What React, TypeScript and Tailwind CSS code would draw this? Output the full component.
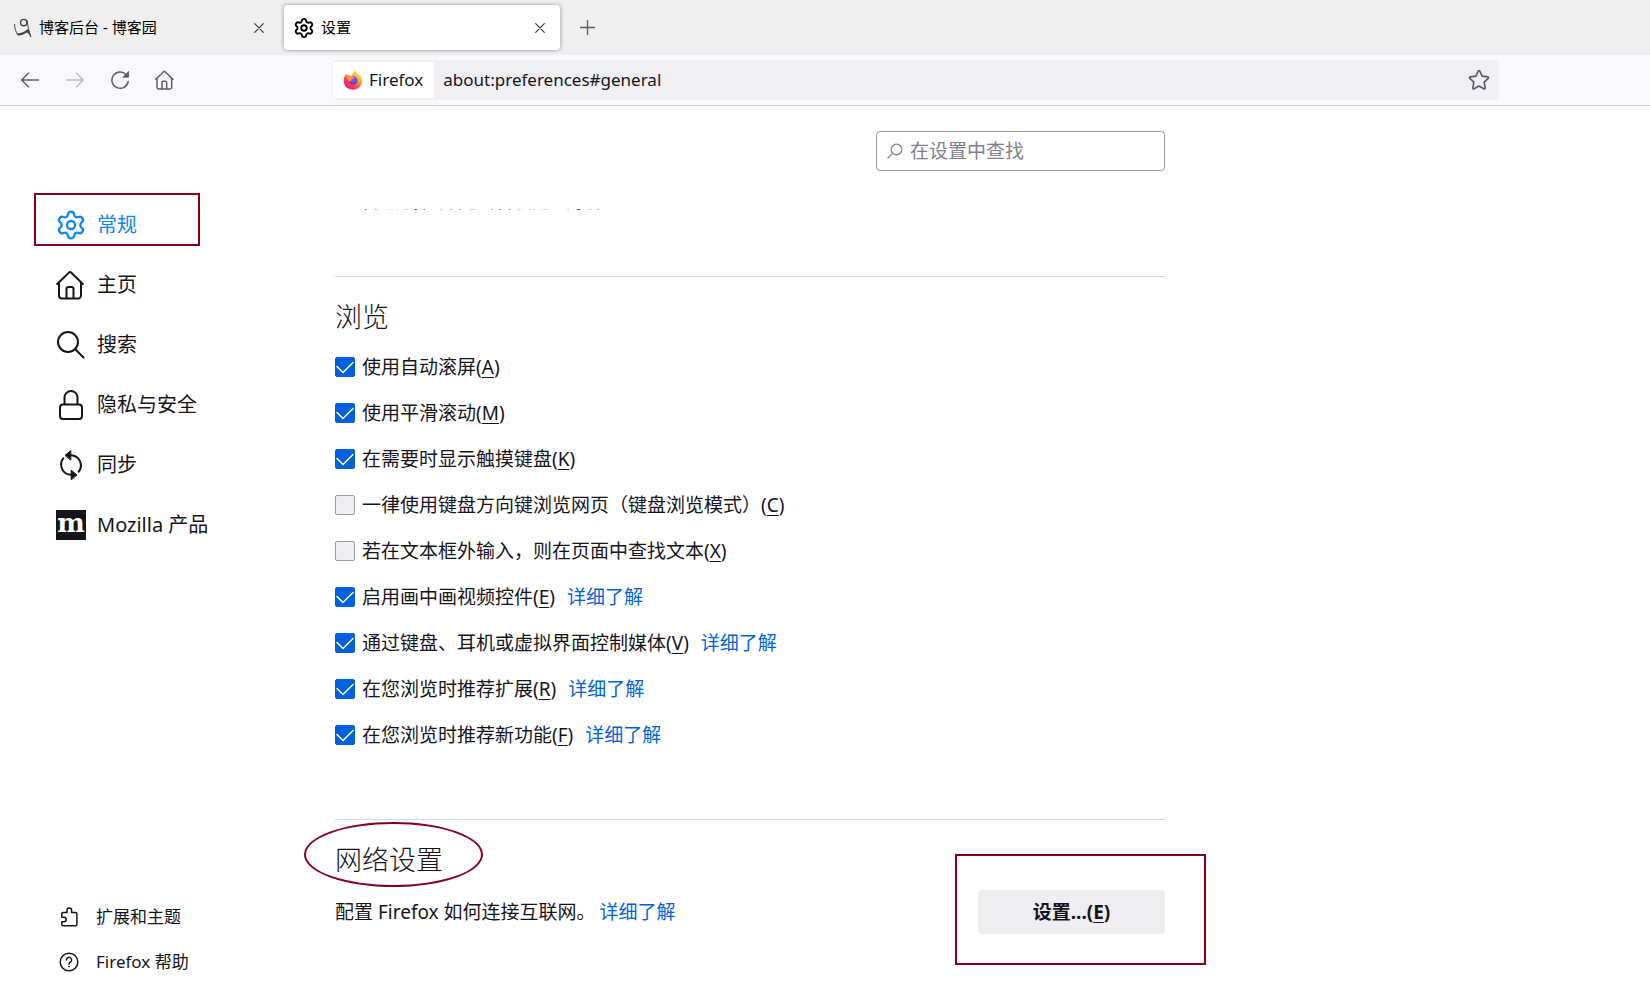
import React from 'react';
import { Settings } from 'lucide-react';

const HomeIcon = ({ className }: { className: string }) => (
    <svg viewBox="0 0 30 30" fill="none" stroke="currentColor" strokeLinecap="round" strokeLinejoin="round" className={className}>
        <path d="M1.2 14 12.9 2.6a1.6 1.6 0 0 1 2.2 0L26.8 14" />
        <path d="M3 13v12.5a3 3 0 0 0 3 3h16a3 3 0 0 0 3-3V13" />
        <path d="M10.5 28v-9a2 2 0 0 1 2-2h3a2 2 0 0 1 2 2v9" />
    </svg>
);

const SearchIcon = () => (
    <svg viewBox="0 0 30 30" fill="none" stroke="currentColor" strokeWidth="2" strokeLinecap="round" className="size-[30px]">
        <circle cx="12" cy="12" r="10" />
        <path d="m19.5 19.5 8 8" />
    </svg>
);

const LockIcon = () => (
    <svg viewBox="0 0 30 30" fill="none" stroke="currentColor" strokeWidth="2" className="size-[30px]">
        <rect x="4" y="14.5" width="22" height="14.5" rx="3" />
        <path d="M8.5 14.5V7.5a6.5 6.5 0 0 1 13 0v7" />
    </svg>
);

const SyncIcon = () => (
    <svg viewBox="0 0 30 30" fill="none" stroke="currentColor" strokeWidth="2" strokeLinecap="round" className="size-[30px]">
        <path d="M15 5.2A10.2 10.2 0 0 1 22.6 21.8" />
        <path d="M15 24.8A10.2 10.2 0 0 1 7.4 8.2" />
        <path d="M9.3 5.2 14.8.6v9.2zM20.7 24.8l-5.5-4.6v9.2z" fill="currentColor" strokeWidth="1" strokeLinejoin="round" />
    </svg>
);

const MozillaIcon = () => (
    <span aria-hidden="true" className="flex size-[30px] justify-center bg-[#15141a] font-['DejaVu_Serif',serif] text-[26px] leading-[26px] font-bold text-white">
        m
    </span>
);

const PuzzleIcon = () => (
    <svg viewBox="0 0 20 20" fill="none" stroke="currentColor" strokeWidth="1.5" strokeLinejoin="round" className="size-5">
        <path d="M2.8 10.2V6.8a1.4 1.4 0 0 1 1.4-1.4H8V3.3a2.3 2.3 0 0 1 4.6 0v2.1h3.9a1.4 1.4 0 0 1 1.4 1.4v10.6a1.4 1.4 0 0 1-1.4 1.4H4.2a1.4 1.4 0 0 1-1.4-1.4v-2.7h2.1a2.2 2.2 0 0 0 0-4.5z" />
    </svg>
);

const HelpIcon = () => (
    <svg viewBox="0 0 20 20" fill="none" stroke="currentColor" strokeWidth="1.5" strokeLinecap="round" className="size-5">
        <circle cx="10" cy="10" r="8.8" />
        <path d="M7.4 8a2.6 2.6 0 1 1 4.2 2c-.9.7-1.6 1.1-1.6 2.2" />
        <circle cx="10" cy="14.6" r=".5" fill="currentColor" strokeWidth=".8" />
    </svg>
);

const CloseIcon = () => (
    <svg viewBox="0 0 10 10" fill="none" stroke="currentColor" strokeWidth="1.1" strokeLinecap="round" className="size-[10px]">
        <path d="M.7.7l8.6 8.6M9.3.7.7 9.3" />
    </svg>
);

const BlogIcon = () => (
    <svg viewBox="0 0 20 20" fill="none" stroke="#444" className="size-5">
        <circle cx="10.7" cy="4.600" r="3.2" strokeWidth="1.4" />
        <path d="M1.500 6c.2 4 1.200 7.600 3.100 10.600" strokeWidth="1" />
        <path d="M4.300 16.600c3.700-.3 8-1.800 10.700-4.600" strokeWidth="2" />
        <path d="M14.200 2.400c.3 4.600 1.500 10.800 3.800 16.400-1.600-2.800-3.200-4.600-5.200-5.500l2.600-1.500" fill="#444" strokeWidth="1" />
    </svg>
);

const FirefoxLogo = () => (
    <svg viewBox="0 0 20 20" className="size-5">
        <defs>
            <linearGradient id="flame" x1="0.85" y1="0.1" x2="0.2" y2="0.95">
                <stop offset="0" stopColor="#fff44f" />
                <stop offset="0.35" stopColor="#ffa436" />
                <stop offset="0.65" stopColor="#ff4a4a" />
                <stop offset="1" stopColor="#e3158b" />
            </linearGradient>
            <radialGradient id="globe" cx="0.5" cy="0.3" r="0.7">
                <stop offset="0" stopColor="#9059ff" />
                <stop offset="1" stopColor="#5b3fc4" />
            </radialGradient>
        </defs>
        <path d="M12.400.2c.3 1.900 1.600 2.800 2.900 4 .5.400.8.9 1 1.400.3-.2.500-.5.500-.9 1.700 1.900 2.600 4.100 2.400 6.600-.400 4.700-4.300 8.500-9.300 8.500-5.100 0-9.200-4-9.200-9 0-2.800.9-5.200 2.300-7l.3 2c.5-.7 1.100-1.200 1.600-1.500.1.500.4.9.7 1.200 1.100-.1 2.300 0 3.300.5C9.400 4 10.700 1.600 12.400.2z" fill="url(#flame)" />
        <circle cx="10.200" cy="10.500" r="4.300" fill="url(#globe)" />
        <path d="M3.500 6.500c1.800-1.200 3.900-1 5.200.3 1 .1 2 .1 2.700.4-.2 1.300-1.800 1.300-2.600 2-.7.700-.3 1.700-1.900 2.200C5.300 11 4 9 3.500 6.500z" fill="#ff9a2e" />
    </svg>
);

const navItems = [
    { label: '常规', icon: <Settings size={32} strokeWidth={1.7} className="-m-px shrink-0" />, active: true },
    { label: '主页', icon: <HomeIcon className="size-[30px] stroke-2" /> },
    { label: '搜索', icon: <SearchIcon /> },
    { label: '隐私与安全', icon: <LockIcon /> },
    { label: '同步', icon: <SyncIcon /> },
    { label: 'Mozilla 产品', icon: <MozillaIcon /> },
];

const options = [
    { label: '使用自动滚屏', accessKey: 'A', checked: true },
    { label: '使用平滑滚动', accessKey: 'M', checked: true },
    { label: '在需要时显示触摸键盘', accessKey: 'K', checked: true },
    { label: '一律使用键盘方向键浏览网页（键盘浏览模式）', accessKey: 'C', checked: false },
    { label: '若在文本框外输入，则在页面中查找文本', accessKey: 'X', checked: false },
    { label: '启用画中画视频控件', accessKey: 'E', checked: true, learnMore: true },
    { label: '通过键盘、耳机或虚拟界面控制媒体', accessKey: 'V', checked: true, learnMore: true },
    { label: '在您浏览时推荐扩展', accessKey: 'R', checked: true, learnMore: true },
    { label: '在您浏览时推荐新功能', accessKey: 'F', checked: true, learnMore: true },
];

const AccessKey = ({ children }: { children: string }) => (
    <>(<span className="underline decoration-1 underline-offset-[3px]">{children}</span>)</>
);

const LearnMore = ({ className }: { className: string }) => (
    <a href="#learn-more" className={`text-[#0061e0] ${className}`}>详细了解</a>
);

const TabBar = () => (
    <div className="flex h-[55px] items-center bg-[#efefef] text-[15px] text-black">
        <div className="flex w-[284px] items-center pr-5 pl-[13px]">
            <BlogIcon />
            <span className="ml-[6px] flex-1">博客后台 - 博客园</span>
            <button aria-label="关闭标签页" className="text-[#333]"><CloseIcon /></button>
        </div>
        <div className="flex h-[45px] w-[276px] items-center rounded-[4px] bg-white pr-[15px] pl-[9px] shadow-[0_0_4px_rgba(0,0,0,0.4)]">
            <Settings size={22} strokeWidth={2} className="shrink-0" />
            <span className="ml-[6px] flex-1">设置</span>
            <button aria-label="关闭标签页" className="text-[#333]"><CloseIcon /></button>
        </div>
        <button aria-label="新建标签页" className="ml-5 text-[#5b5b66]">
            <svg viewBox="0 0 15 15" fill="none" stroke="currentColor" strokeWidth="1.3" className="size-[15px]">
                <path d="M7.500 0v15M0 7.500h15" />
            </svg>
        </button>
    </div>
);

const Toolbar = () => (
    <div className="flex h-[51px] items-center border-b border-[#cccccc] bg-[#f9f9fb] text-[#5b5b66]">
        <div className="flex w-[332px] shrink-0 items-center gap-[25px] pl-5">
            <button aria-label="后退">
                <svg viewBox="0 0 20 20" fill="none" stroke="currentColor" strokeWidth="1.500" strokeLinecap="round" strokeLinejoin="round" className="size-5">
                    <path d="M18.500 10H1.800M8.500 3.200 1.700 10l6.800 6.800" />
                </svg>
            </button>
            <button aria-label="前进" disabled className="text-[#bcbcc2]">
                <svg viewBox="0 0 20 20" fill="none" stroke="currentColor" strokeWidth="1.500" strokeLinecap="round" strokeLinejoin="round" className="size-5">
                    <path d="M1.500 10h16.700M11.500 3.200l6.800 6.800-6.800 6.800" />
                </svg>
            </button>
            <button aria-label="刷新">
                <svg viewBox="0 0 20 20" fill="none" stroke="currentColor" strokeWidth="1.500" strokeLinecap="round" className="size-5">
                    <path d="M18.200 11.500A8.200 8.200 0 1 1 16.200 4.600" />
                    <path d="M18.600 1.800v5.400h-5.400z" fill="currentColor" strokeWidth=".8" strokeLinejoin="round" />
                </svg>
            </button>
            <button aria-label="主页"><HomeIcon className="size-5 stroke-[2.2]" /></button>
        </div>
        <div className="mr-[151px] flex h-10 flex-1 items-center rounded-[5px] bg-[#f0eff4] pr-[9px] pl-[1px] text-[17px] text-[#15141a]">
            <div className="flex h-9 shrink-0 items-center rounded-[3px] bg-white pr-[11px] pl-[10px]">
                <FirefoxLogo />
                <span className="ml-[6px]">Firefox</span>
            </div>
            <input aria-label="地址栏" defaultValue="about:preferences#general" className="ml-[9px] min-w-0 flex-1 bg-transparent outline-none" />
            <button aria-label="添加书签" className="text-[#5b5b66]">
                <svg viewBox="0 0 20 20" fill="none" stroke="currentColor" strokeWidth="1.500" strokeLinejoin="round" className="size-[22px]">
                    <path d="M9.300 1.800a.8.8 0 0 1 1.400 0l2.100 4.700 5.100.6c.7.100 1 .9.500 1.400l-3.700 3.500.9 5.100c.1.700-.6 1.200-1.200.9L10 15.500 5.600 18c-.6.300-1.300-.2-1.200-.9l.9-5.100-3.700-3.500c-.5-.5-.2-1.300.5-1.400l5.100-.6z" />
                </svg>
            </button>
        </div>
    </div>
);

const Sidebar = () => (
    <aside className="flex w-[335px] shrink-0 flex-col pt-[89px] pb-[19px]">
        <nav className="flex flex-col text-[20px]">
            {navItems.map((item) => (
                <a
                    key={item.label}
                    href="#general"
                    className={`relative flex h-[60px] items-center gap-[11px] pl-14 ${item.active ? 'text-[#0a84ff]' : ''}`}
                >
                    {item.icon}
                    <span>{item.label}</span>
                    {item.active && <span className="absolute top-[-2px] left-[34px] h-[53px] w-[166px] border-2 border-[#84001b]"></span>}
                </a>
            ))}
        </nav>
        <nav className="mt-auto flex flex-col text-[17px]">
            <a href="#addons" className="flex h-[45px] items-center gap-[17px] pl-[59px]">
                <PuzzleIcon />
                <span>扩展和主题</span>
            </a>
            <a href="#help" className="flex h-[45px] items-center gap-[17px] pl-[59px]">
                <HelpIcon />
                <span>Firefox 帮助</span>
            </a>
        </nav>
    </aside>
);

const Option = ({ option }: { option: (typeof options)[number] }) => (
    <li className="flex h-[46px] items-center">
        <label className="flex items-center gap-[7px]">
            <span className="relative size-5 shrink-0">
                <input
                    type="checkbox"
                    defaultChecked={option.checked}
                    className="peer block size-5 appearance-none rounded-[2px] border border-[#9a9a9f] bg-[#eeeef0] checked:border-[#0061e0] checked:bg-[#0061e0]"
                />
                <svg viewBox="0 0 20 20" fill="none" stroke="white" strokeWidth="1.500" strokeLinecap="round" strokeLinejoin="round" className="pointer-events-none absolute inset-0 hidden peer-checked:block">
                    <path d="m2 9.500 6 6L18 5.500" />
                </svg>
            </span>
            <span>{option.label}<AccessKey>{option.accessKey}</AccessKey></span>
        </label>
        {option.learnMore && <LearnMore className="ml-3" />}
    </li>
);

export default function App() {
    return (
        <div className="flex min-h-screen flex-col bg-white font-['Noto_Sans','Noto_Sans_CJK_SC',sans-serif] text-[#15141a]">
            <TabBar />
            <Toolbar />
            <div className="flex flex-1">
                <Sidebar />
                <main className="w-full max-w-[830px] pt-[25px] text-[19px] leading-7">
                    {/* Search */}
                    <label className="ml-auto flex h-10 w-[289px] items-center gap-[7px] rounded-[4px] border border-[#999999] pl-[10px] text-[#80808a]">
                        <svg viewBox="0 0 16 16" fill="none" stroke="currentColor" strokeWidth="1.200" strokeLinecap="round" className="size-4 shrink-0">
                            <circle cx="9.500" cy="6.500" r="5.300" />
                            <path d="M5.700 10.300 1 15" />
                        </svg>
                        <input type="search" aria-label="在设置中查找" placeholder="在设置中查找" className="min-w-0 flex-1 bg-transparent outline-none placeholder:text-[#80808a]" />
                    </label>

                    {/* Scrolled-off end of the performance section */}
                    <div className="mt-[38px] flex h-[2px] flex-col justify-end overflow-hidden pl-[27px] text-[17px] leading-[18px] text-[#5b5b66]">
                        <p>自动选择适合您计算机配置的设置。</p>
                    </div>

                    {/* Browsing */}
                    <section className="mt-[65px] border-t border-[#d7d7db] pt-5">
                        <h2 className="text-[27px] leading-10 font-light">浏览</h2>
                        <ul className="mt-[7px]">
                            {options.map((option) => <Option key={option.accessKey} option={option} />)}
                        </ul>
                    </section>

                    {/* Network settings */}
                    <section className="mt-[61px] border-t border-[#d7d7db] pt-5">
                        <h2 className="relative text-[27px] leading-10 font-light">
                            网络设置
                            <span className="absolute top-[-18px] left-[-31px] h-[65px] w-[179px] rounded-[50%] border-2 border-[#84001b]"></span>
                        </h2>
                        <div className="mt-[10px] flex items-center justify-between">
                            <p>配置 Firefox 如何连接互联网。<LearnMore className="ml-1" /></p>
                            <div className="relative">
                                <button className="h-11 w-[187px] rounded-[4px] bg-[#eeeef0] font-bold">设置...<AccessKey>E</AccessKey></button>
                                <span className="pointer-events-none absolute top-[-36px] left-[-23px] h-[111px] w-[251px] border-2 border-[#84001b]"></span>
                            </div>
                        </div>
                    </section>
                </main>
            </div>
        </div>
    );
}
